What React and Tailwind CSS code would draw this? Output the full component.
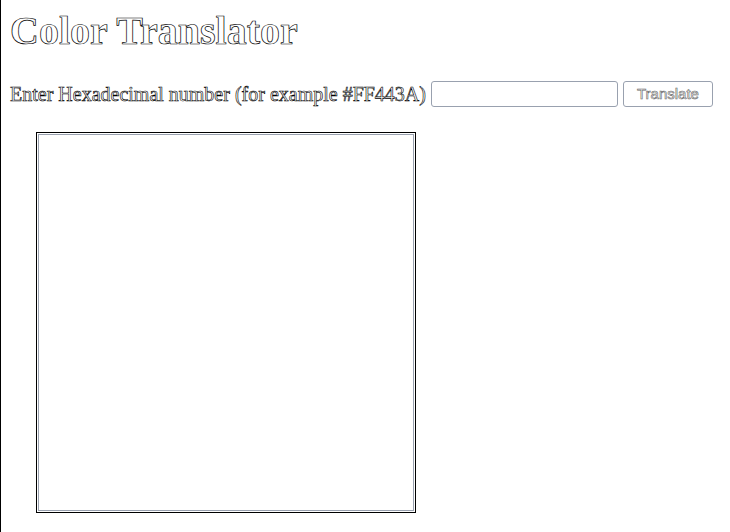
import React, { useState } from 'react';

const App = () => {
  const [hex, setHex] = useState('');

  return (
    <div className="min-h-[532px] border-l border-black bg-white px-[9px] py-[8px] font-['Liberation_Serif',serif] antialiased">
      <h1 className="text-[40px] font-bold leading-[46px] text-white [-webkit-text-stroke:0.7px_#000]">Color Translator</h1>

      <div className="mt-[27px] flex items-center gap-[5px]">
        <span className="text-[20px] leading-[24px] text-white [-webkit-text-stroke:0.6px_#000]">
          Enter Hexadecimal number (for example #FF443A)
        </span>
        <input
          value={hex}
          onChange={(e) => setHex(e.target.value)}
          className="h-[26px] w-[187px] rounded-[3px] border border-gray-400 bg-white px-1 outline-none"
        />
        <button className="h-[26px] w-[90px] rounded-[3px] border border-gray-400 bg-white font-['Liberation_Sans',sans-serif] text-[15px] text-white [-webkit-text-stroke:0.6px_#666]">
          Translate
        </button>
      </div>

      <div className="ml-[26px] mt-[25px] h-[381px] w-[380px] border border-black p-[1px]">
        <div className="h-full w-full border border-gray-400" />
      </div>
    </div>
  );
};

export default App;
